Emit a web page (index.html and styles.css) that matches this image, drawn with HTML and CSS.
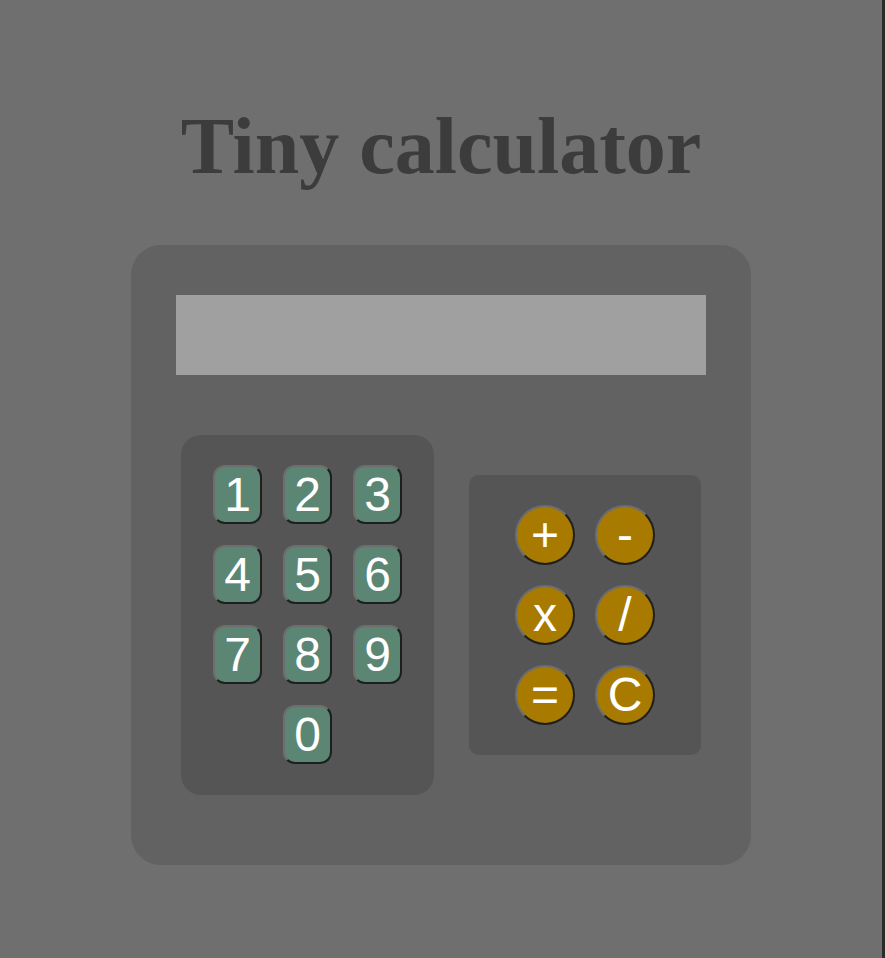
FILE: index.html
```html
<!DOCTYPE html>
<html lang="en">
<head>
<meta charset="utf-8">
<title>Tiny calculator</title>
<link rel="stylesheet" href="styles.css">
</head>
<body>
<h1 class="title">Tiny calculator</h1>
<div class="calculator">
  <div class="display"></div>
  <div class="keys">
    <div class="numpad">
      <button class="num">1</button>
      <button class="num">2</button>
      <button class="num">3</button>
      <button class="num">4</button>
      <button class="num">5</button>
      <button class="num">6</button>
      <button class="num">7</button>
      <button class="num">8</button>
      <button class="num">9</button>
      <button class="num zero">0</button>
    </div>
    <div class="ops">
      <button class="op">+</button>
      <button class="op">-</button>
      <button class="op">x</button>
      <button class="op">/</button>
      <button class="op">=</button>
      <button class="op">C</button>
    </div>
  </div>
</div>
</body>
</html>
```
FILE: styles.css
```css
html {
  background: #6f6f6f;
  border-right: 3px solid #2b2b2b;
  min-height: 100%;
}
body {
  margin: 0;
  background: #6f6f6f;
  font-family: "Liberation Sans", Arial, sans-serif;
  display: flex;
  flex-direction: column;
  align-items: center;
}
.title {
  margin: 102px 0 54px;
  font-family: "Liberation Serif", "Times New Roman", serif;
  font-size: 80px;
  line-height: 89px;
  font-weight: bold;
  color: #3c3c3c;
}
.calculator {
  box-sizing: border-box;
  width: 620px;
  height: 620px;
  padding: 50px 45px;
  background: #626262;
  border-radius: 30px;
}
.display {
  height: 80px;
  background: #a0a0a0;
}
.keys {
  margin: 60px 5px 0;
  display: flex;
  justify-content: space-between;
  align-items: center;
}
.numpad {
  box-sizing: border-box;
  width: 253px;
  height: 360px;
  padding: 30px 32px;
  background: #555555;
  border-radius: 20px;
  display: grid;
  grid-template-columns: repeat(3, 49px);
  grid-auto-rows: 59px;
  gap: 21px;
  align-content: start;
}
.ops {
  box-sizing: border-box;
  width: 232px;
  height: 280px;
  padding: 30px 46px;
  background: #555555;
  border-radius: 10px;
  display: grid;
  grid-template-columns: repeat(2, 60px);
  grid-auto-rows: 60px;
  gap: 20px;
  align-content: start;
}
button {
  box-sizing: border-box;
  margin: 0;
  padding: 0;
  border: 2px solid;
  border-color: #6e6e6e #1f1f1f #1f1f1f #6e6e6e;
  color: #ffffff;
  font-family: "Liberation Sans", Arial, sans-serif;
  font-size: 48px;
  line-height: 1;
  display: flex;
  align-items: center;
  justify-content: center;
}
.num {
  width: 49px;
  height: 59px;
  background: #5b8673;
  border-radius: 12px;
}
.zero {
  grid-column: 2;
}
.op {
  width: 60px;
  height: 60px;
  background: #a87a00;
  border-radius: 50%;
}
```
